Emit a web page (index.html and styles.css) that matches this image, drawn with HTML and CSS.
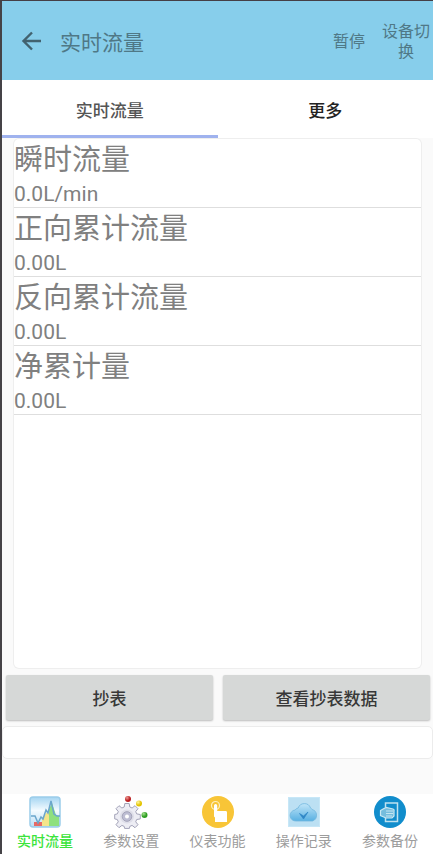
FILE: index.html
```html
<!DOCTYPE html>
<html lang="zh-CN">
<head>
<meta charset="utf-8">
<meta name="viewport" content="width=device-width, initial-scale=1">
<title>实时流量</title>
<link rel="stylesheet" href="styles.css">
</head>
<body>
<div class="app">
  <header class="bar">
    <button class="back" type="button" aria-label="返回">
      <svg width="20" height="20" viewBox="0 0 20 20" fill="none" stroke="currentColor" stroke-width="2.400"><path d="M20 10H2.500M11 1.500L2.500 10L11 18.500"/></svg>
    </button>
    <h1 class="title">实时流量</h1>
    <button class="action" type="button">暂停</button>
    <button class="action action-switch" type="button">设备切换</button>
  </header>
  <nav class="tabs">
    <button class="tab tab-active" type="button">实时流量</button>
    <button class="tab" type="button">更多</button>
  </nav>
  <main class="content">
    <dl class="card">
      <div class="row"><dt>瞬时流量</dt><dd>0.0L/min</dd></div>
      <div class="row"><dt>正向累计流量</dt><dd>0.00L</dd></div>
      <div class="row"><dt>反向累计流量</dt><dd>0.00L</dd></div>
      <div class="row"><dt>净累计量</dt><dd>0.00L</dd></div>
    </dl>
    <div class="buttons">
      <button class="button" type="button">抄表</button>
      <button class="button" type="button">查看抄表数据</button>
    </div>
    <div class="message"></div>
  </main>
  <nav class="bottom">
    <a class="item item-active" href="#flow">
      <svg class="icon" viewBox="0 0 34 34">
        <defs>
          <linearGradient id="glass" x2="0" y2="1"><stop offset="0" stop-color="#a5d5f2"/><stop offset=".45" stop-color="#f4fbff"/><stop offset="1" stop-color="#b9def5"/></linearGradient>
        </defs>
        <rect x="2" y="2" width="30" height="30" rx="3" fill="url(#glass)" stroke="#9bcdea" stroke-width="1.500"/>
        <path d="M6 27h8v4H6z" fill="#e66a66"/>
        <path d="M14 23l7-8v16h-7z" fill="#f4e58a"/>
        <path d="M21 14l3-6 4 12 3 1v10H21z" fill="#8fe07f"/>
        <path d="M3 21h4l3 7 3-6 2 2 3-9 2 3 3-12 3 13 3 2h3" fill="none" stroke="#6ba6cc" stroke-width="1.500"/>
      </svg>
      <span>实时流量</span>
    </a>
    <a class="item" href="#settings">
      <svg class="icon" viewBox="0 0 34 34">
        <defs>
          <radialGradient id="red" cx=".35" cy=".3"><stop stop-color="#ef9b95"/><stop offset="1" stop-color="#b91d20"/></radialGradient>
          <radialGradient id="yellow" cx=".35" cy=".3"><stop stop-color="#fff8a0"/><stop offset="1" stop-color="#e3c300"/></radialGradient>
          <radialGradient id="green" cx=".35" cy=".3"><stop stop-color="#a5df8e"/><stop offset="1" stop-color="#2f9e22"/></radialGradient>
        </defs>
        <g fill="#ededf4" stroke="#a3a3b8" stroke-width="1">
          <path d="M10.200 12l.6-3.500h4.400l.6 3.500 2.300 1 2.900-2.300 3 3-2.300 2.900 1 2.300 3.600.6v4.400l-3.600.6-1 2.300 2.300 2.900-3 3-2.900-2.300-2.300 1-.4 2h-4.800l-.4-2-2.300-1L5 32.700l-3-3 2.300-2.900-1-2.300-2.600-.6v-4.400l2.600-.6 1-2.300L2 13.700l3-3L7.900 13z"/>
          <circle cx="13" cy="21.500" r="7" fill="#dedee9" stroke="none"/>
          <circle cx="13" cy="21.500" r="4.800" fill="#bdbdd3"/>
          <circle cx="13" cy="21.500" r="2" fill="#fff" stroke="none"/>
        </g>
        <circle cx="14" cy="4" r="3" fill="url(#red)"/>
        <circle cx="25" cy="8.500" r="3" fill="url(#yellow)"/>
        <circle cx="30.500" cy="20" r="3" fill="url(#green)"/>
      </svg>
      <span>参数设置</span>
    </a>
    <a class="item" href="#functions">
      <svg class="icon" viewBox="0 0 34 34">
        <circle cx="17" cy="17" r="16" fill="#f8c537"/>
        <circle cx="14.500" cy="10.500" r="4" fill="none" stroke="#fff0c0" stroke-width="1.200"/>
        <path d="M13 10.500a1.600 1.600 0 0 1 3.200 0V16H25q1 .2 1 1.200V27H14v-4.500l-1-1z" fill="#fff"/>
      </svg>
      <span>仪表功能</span>
    </a>
    <a class="item" href="#records">
      <svg class="icon" viewBox="0 0 34 34">
        <defs><linearGradient id="cloud" x2="0" y2="1"><stop stop-color="#c0e5f8"/><stop offset="1" stop-color="#58b0e2"/></linearGradient></defs>
        <rect x="1" y="2" width="32" height="30" fill="#c7e7f7"/>
        <rect x="2" y="3" width="30" height="28" fill="#bce0f3"/>
        <path d="M9 26a5.500 5.500 0 0 1-.8-11 4 4 0 0 1 3-2A6.500 6.500 0 0 1 23.500 13q1 .3 1.500 1.500a6 6 0 0 1 .5 11.500z" fill="url(#cloud)" stroke="#72b7de" stroke-width=".8"/>
        <path d="M12.500 18.500l4 5.500 4.500-7-4.500 4z" fill="#2f86c6" stroke="#2f86c6" stroke-width=".7"/>
      </svg>
      <span>操作记录</span>
    </a>
    <a class="item" href="#backup">
      <svg class="icon" viewBox="0 0 34 34">
        <circle cx="17" cy="17" r="16" fill="#118dcc"/>
        <path d="M12.500 12V8h12v18.500h-12V23" fill="none" stroke="#bfe2f0" stroke-width="1.500"/>
        <path d="M7.500 15.500l5.500-3 7 1.500q1.500.5 1 2v5l-2 2h-6l-5.500-2.500z" fill="#75bddd" stroke="#c9e8f3" stroke-width="1.200"/>
        <path d="M13 16h7M13 18.500h7M13 21h6" stroke="#d7eff7" stroke-width=".8"/>
      </svg>
      <span>参数备份</span>
    </a>
  </nav>
</div>
</body>
</html>
```
FILE: styles.css
```css
* {
  box-sizing: border-box;
}

body {
  margin: 0;
  font-family: Roboto, "Noto Sans CJK SC", sans-serif;
  color: #808080;
  background: #fafafa;
}

button {
  margin: 0;
  padding: 0;
  border: 0;
  background: none;
  font: inherit;
  color: inherit;
}

.app {
  min-height: 100vh;
  display: flex;
  flex-direction: column;
  border-top: 1px solid #453f45;
  border-left: 2px solid #454347;
}

.bar {
  display: flex;
  align-items: center;
  height: 79px;
  padding: 0 2px 0 19px;
  background: #87ceeb;
  color: #4f7886;
}

.back {
  display: flex;
  color: #42626f;
}

.title {
  flex: 1;
  margin: 0;
  padding-left: 19px;
  font-size: 21px;
  font-weight: 400;
}

.action {
  padding-top: 2px;
  font-size: 16px;
  line-height: 20px;
}

.action-switch {
  width: 50px;
  margin-left: 16px;
}

.tabs {
  display: flex;
  height: 58px;
  background: #fff;
}

.tab {
  flex: 1;
  padding-top: 3px;
  border-bottom: 3px solid transparent;
  font-size: 17px;
  font-weight: 500;
  color: #222;
}

.tab-active {
  border-bottom-color: #9fb2ee;
  color: #555;
}

.content {
  flex: 1;
  display: flex;
  flex-direction: column;
}

.card {
  flex: 1;
  margin: 1px 12px;
  border-radius: 5px;
  background: #fff;
  box-shadow: 0 0 0 1px #eee;
}

.row {
  height: 69px;
  border-bottom: 1px solid #dedede;
}

.row dt {
  font-size: 29px;
  line-height: 42px;
}

.row dd {
  margin: 0;
  font-size: 21px;
  line-height: 26px;
}

.buttons {
  display: flex;
  gap: 10px;
  padding: 6px 3px 6px 4px;
}

.button {
  flex: 1;
  height: 45px;
  border-radius: 2px;
  background: #d6d8d7;
  box-shadow: 0 1px 2px #bbb;
  font-size: 17px;
  font-weight: 500;
  color: #383838;
}

.message {
  height: 33px;
  border: 1px solid #ececec;
  border-radius: 5px;
  background: #fff;
}

.bottom {
  display: flex;
  height: 60px;
  margin-top: 35px;
  background: #fff;
}

.item {
  flex: 1;
  display: flex;
  flex-direction: column;
  align-items: center;
  padding-top: 1px;
  font-size: 14px;
  line-height: 24px;
  color: #9c9c9c;
  text-decoration: none;
}

.item-active {
  font-weight: 500;
  color: #3be43b;
}

.icon {
  width: 34px;
  height: 34px;
}
```
